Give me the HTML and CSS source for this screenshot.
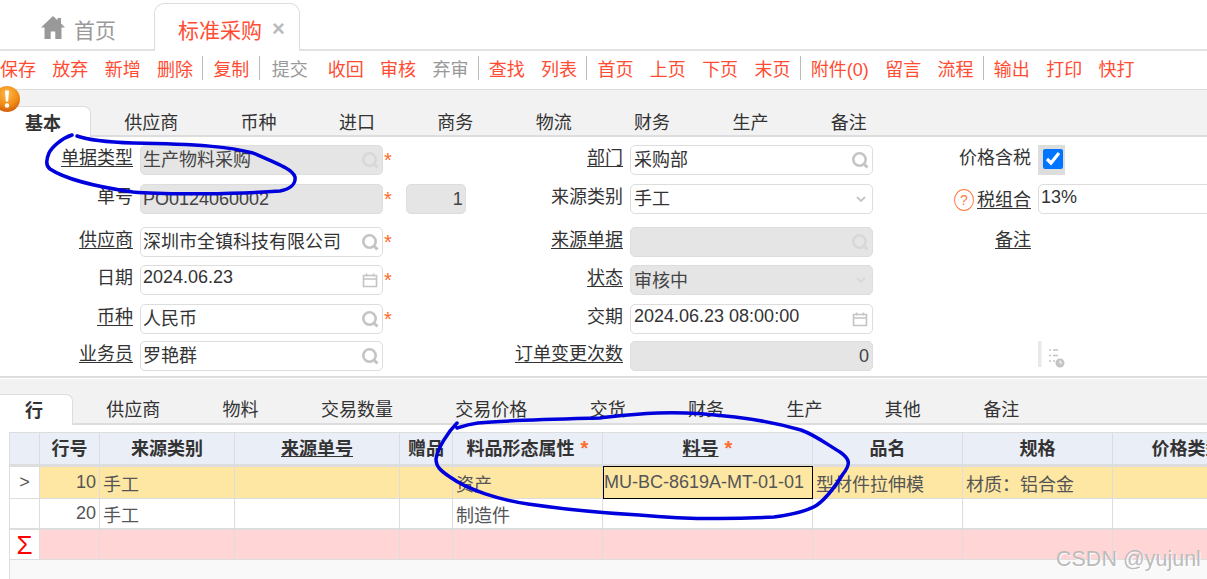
FILE: index.html
```html
<!DOCTYPE html>
<html lang="en">
<head>
  <meta charset="UTF-8" />
  <meta name="viewport" content="width=device-width, initial-scale=1.0"/>
  <title>标准采购</title>
  <link rel="stylesheet" href="styles.css">
</head>
<body>

  <svg class="sprites" width="0" height="0">
    <symbol id="i-search" viewBox="0 0 18 18">
      <circle cx="8.500" cy="8.500" r="6.200" fill="none" stroke="currentColor" stroke-width="2.600"/>
      <path d="M13 13l3.500 3.500" stroke="currentColor" stroke-width="3" fill="none"/>
    </symbol>
    <symbol id="i-date" viewBox="0 0 18 18">
      <path d="M2.500 4.500h13v11h-13zM2.500 8h13M5.500 2.500v3M12.500 2.500v3" fill="none" stroke="currentColor" stroke-width="1.600"/>
    </symbol>
    <symbol id="i-down" viewBox="0 0 12 12">
      <path d="M2 4l4 4 4-4" fill="none" stroke="currentColor" stroke-width="1.800"/>
    </symbol>
  </svg>

  <div class="top-tabs">
    <div class="top-tab">
      <svg class="home" viewBox="0 0 24 24"><path d="M12 1L0 12.500h3.500V24h6.200v-7.500h4.600V24h6.200V12.500H24L20 8.600V3h-3.500v2.300z" fill="#999"/></svg>
      首页
    </div>
    <div class="top-tab active">标准采购 <span class="close">×</span></div>
  </div>

  <div class="toolbar">
    <a>保存</a><a>放弃</a><a>新增</a><a>删除</a><i></i>
    <a>复制</a><i></i>
    <a class="off first">提交</a><a>收回</a><a>审核</a><a class="off">弃审</a><i></i>
    <a>查找</a><a>列表</a><i></i>
    <a>首页</a><a>上页</a><a>下页</a><a>末页</a><i></i>
    <a>附件(0)</a><a>留言</a><a>流程</a><i></i>
    <a>输出</a><a>打印</a><a>快打</a>
  </div>

  <div class="tabs main-tabs">
    <span class="tab active">基本</span>
    <span class="tab">供应商</span>
    <span class="tab">币种</span>
    <span class="tab">进口</span>
    <span class="tab">商务</span>
    <span class="tab">物流</span>
    <span class="tab">财务</span>
    <span class="tab">生产</span>
    <span class="tab">备注</span>
  </div>

  <div class="form">
    <div class="field">
      <label class="link">单据类型</label>
      <div class="box off">生产物料采购<svg class="ico faint"><use href="#i-search"/></svg></div><b class="req">*</b>
    </div>
    <div class="field">
      <label class="link">部门</label>
      <div class="box">采购部<svg class="ico"><use href="#i-search"/></svg></div>
    </div>
    <div class="field">
      <label>价格含税</label>
      <div class="check-cell"><input type="checkbox" checked></div>
    </div>

    <div class="field">
      <label>单号</label>
      <div class="box off">PO0124060002</div><b class="req">*</b>
      <div class="box off seq">1</div>
    </div>
    <div class="field">
      <label>来源类别</label>
      <div class="box">手工<svg class="ico small"><use href="#i-down"/></svg></div>
    </div>
    <div class="field">
      <label class="link low"><span class="help">?</span>税组合</label>
      <div class="box wide latin">13%</div>
    </div>

    <div class="field">
      <label class="link">供应商</label>
      <div class="box">深圳市全镇科技有限公司<svg class="ico"><use href="#i-search"/></svg></div><b class="req">*</b>
    </div>
    <div class="field">
      <label class="link">来源单据</label>
      <div class="box off"><svg class="ico faint"><use href="#i-search"/></svg></div>
    </div>
    <div class="field">
      <label class="link">备注</label>
    </div>

    <div class="field">
      <label>日期</label>
      <div class="box latin">2024.06.23<svg class="ico"><use href="#i-date"/></svg></div><b class="req">*</b>
    </div>
    <div class="field">
      <label class="link">状态</label>
      <div class="box off lower">审核中<svg class="ico small faint"><use href="#i-down"/></svg></div>
    </div>
    <div class="field"></div>

    <div class="field">
      <label class="link">币种</label>
      <div class="box">人民币<svg class="ico"><use href="#i-search"/></svg></div><b class="req">*</b>
    </div>
    <div class="field">
      <label>交期</label>
      <div class="box latin">2024.06.23 08:00:00<svg class="ico"><use href="#i-date"/></svg></div>
    </div>
    <div class="field"></div>

    <div class="field">
      <label class="link">业务员</label>
      <div class="box">罗艳群<svg class="ico"><use href="#i-search"/></svg></div>
    </div>
    <div class="field">
      <label class="link">订单变更次数</label>
      <div class="box off num">0</div>
    </div>
    <div class="field">
      <label></label>
      <svg class="tool-icon" viewBox="0 0 27 28">
        <rect x="0" y="0" width="3.500" height="26" fill="#e8e8e8"/>
        <path d="M11 9h2M15 9h5M11 14.500h2M15 14.500h5M11 20h2M15 20h2" stroke="#c4c4c4" stroke-width="1.600" fill="none"/>
        <circle cx="22" cy="22" r="4.500" fill="#c4c4c4"/>
        <path d="M22 19.500V22h2" stroke="#fff" stroke-width="1" fill="none"/>
      </svg>
    </div>
  </div>

  <div class="tabs sub-tabs">
    <span class="tab active">行</span>
    <span class="tab">供应商</span>
    <span class="tab">物料</span>
    <span class="tab">交易数量</span>
    <span class="tab">交易价格</span>
    <span class="tab">交货</span>
    <span class="tab">财务</span>
    <span class="tab">生产</span>
    <span class="tab">其他</span>
    <span class="tab">备注</span>
  </div>

  <div class="grid-wrap">
    <div class="grid-box">
      <table class="lines">
        <colgroup>
          <col class="c-mark"><col class="c-no"><col class="c-src"><col class="c-doc"><col class="c-gift">
          <col class="c-form"><col class="c-item"><col class="c-name"><col class="c-spec"><col class="c-price">
        </colgroup>
        <thead>
          <tr>
            <th></th>
            <th>行号</th>
            <th>来源类别</th>
            <th><u>来源单号</u></th>
            <th>赠品</th>
            <th>料品形态属性 <b class="req">*</b></th>
            <th><u>料号</u> <b class="req">*</b></th>
            <th>品名</th>
            <th>规格</th>
            <th>价格类型</th>
          </tr>
        </thead>
        <tbody>
          <tr class="current">
            <td class="mark">&gt;</td>
            <td class="right">10</td>
            <td>手工</td>
            <td></td>
            <td></td>
            <td>资产</td>
            <td class="focus">MU-BC-8619A-MT-01-01</td>
            <td>型材件拉伸模</td>
            <td>材质：铝合金</td>
            <td></td>
          </tr>
          <tr>
            <td class="mark"></td>
            <td class="right">20</td>
            <td>手工</td>
            <td></td>
            <td></td>
            <td>制造件</td>
            <td></td>
            <td></td>
            <td></td>
            <td></td>
          </tr>
          <tr class="total">
            <td class="mark sigma">Σ</td>
            <td></td><td></td><td></td><td></td><td></td><td></td><td></td><td></td><td></td>
          </tr>
        </tbody>
      </table>
    </div>
  </div>

  <!-- things lying over the page -->
  <svg class="alert" viewBox="0 0 26 26">
    <defs>
      <radialGradient id="alert-fill" cx="50%" cy="30%" r="75%">
        <stop offset="0" stop-color="#ffb84a"/>
        <stop offset="0.6" stop-color="#f08a14"/>
        <stop offset="1" stop-color="#c9560a"/>
      </radialGradient>
    </defs>
    <circle cx="13" cy="13" r="13" fill="url(#alert-fill)"/>
    <path d="M11 4.500h4l-.8 11h-2.400z" fill="#fff"/>
    <circle cx="13" cy="19.500" r="2.200" fill="#fff"/>
  </svg>

  <svg class="ink" viewBox="0 0 1207 579">
    <path d="M72 135C62 138 52 147 49 153C46 160 46 166 50 169C62 177 90 186 133 192C165 195 240 194 280 191C290 189 296 184 295 177C293 170 283 166 253 153C230 147 200 144 133 143C105 142 88 140 77 136"/>
    <path d="M457 423C447 433 438 448 436 459C436 467 441 471 450 477C468 490 500 500 528 504C555 508 585 512 639 515C670 518 720 520 774 517C795 514 810 510 817 505C827 498 838 482 843 474C851 464 850 459 840 452C825 443 815 435 801 430C780 424 760 420 735 417C710 414 680 412 658 413C630 414 610 417 600 418C560 419 510 420 478 423C470 424 463 426 457 428"/>
  </svg>

  <div class="watermark">CSDN @yujunl</div>

</body>
</html>
```

FILE: styles.css
```css
html, body {
  margin: 0;
  height: 579px;
  overflow: hidden;
}

body {
  position: relative;
  font-family: "Liberation Sans", "Noto Sans CJK SC", sans-serif;
  font-size: 18px;
  color: #333;
  background: #fff;
}

.sprites {
  position: absolute;
}

/* top page tabs */
.top-tabs {
  display: flex;
  align-items: flex-end;
  height: 49px;
  border-bottom: 2px solid #e2e2e2;
}

.top-tab {
  display: flex;
  align-items: center;
  gap: 9px;
  height: 46px;
  margin-bottom: -2px;
  padding-top: 2px;
  box-sizing: border-box;
  font-size: 21px;
  color: #999;
}

.top-tab:first-child {
  width: 154px;
  padding-left: 41px;
}

.top-tab.active {
  width: 146px;
  padding-left: 23px;
  gap: 10px;
  height: 48px;
  background: #fff;
  border: 1px solid #ddd;
  border-bottom: none;
  border-radius: 10px 10px 0 0;
  color: #ff4c33;
}

.home {
  width: 24px;
  height: 24px;
  margin-top: -4px;
}

.close {
  font-size: 22px;
  font-weight: bold;
  color: #bbb;
}

/* toolbar */
.toolbar {
  display: flex;
  align-items: center;
  height: 39px;
  padding-bottom: 5px;
  box-sizing: border-box;
  border-bottom: 1px solid #ddd;
  white-space: nowrap;
}

.toolbar a {
  margin-right: 16.350px;
  color: #ff4c33;
}

.toolbar a.off {
  color: #999;
}

.toolbar a.first {
  margin: 0 20px 0 2px;
}

.toolbar i {
  width: 1px;
  height: 24px;
  margin: 0 10px 0 -7px;
  background: #bbb;
}

/* inner tab bars */
.tabs {
  display: flex;
  align-items: flex-end;
  box-sizing: border-box;
  background: #f2f2f2;
  border-bottom: 2px solid #ddd;
  white-space: nowrap;
}

.main-tabs {
  height: 47px;
}

.sub-tabs {
  height: 46px;
}

.tab {
  height: 29px;
  padding: 0 31.200px;
}

.main-tabs .tab {
  line-height: 35px;
}

.sub-tabs .tab {
  line-height: 33px;
}

.tab.active {
  height: 30px;
  margin-bottom: -2px;
  margin-right: 2px;
  padding: 0 29px 0 25px;
  box-sizing: content-box;
  background: #fff;
  border-right: 1px solid #ddd;
  border-top: 1px solid #ddd;
  border-radius: 0 7px 0 0;
  font-weight: bold;
}

/* header form */
.form {
  display: grid;
  grid-template-columns: 465px 408px 1fr;
  grid-template-rows: 39px 43px 38px 39px 37px 30px;
  height: 231px;
  padding-top: 8px;
  margin-bottom: 1px;
  border-bottom: 2px solid #ddd;
}

.field {
  display: flex;
  align-items: flex-start;
  min-width: 0;
}

.field label {
  flex: none;
  width: 133px;
  margin-right: 7px;
  line-height: 26px;
  text-align: right;
  white-space: nowrap;
}

.field:nth-child(3n+2) label,
.field:nth-child(3n) label {
  width: 158px;
}

.link {
  text-decoration: underline;
  text-underline-offset: 2px;
}

.low {
  padding-top: 3px;
}

.help {
  display: inline-block;
  width: 18px;
  height: 20px;
  margin-right: 3px;
  border: 1px solid #ff7a45;
  border-radius: 50%;
  font-size: 14px;
  line-height: 20px;
  text-align: center;
  color: #ff7a45;
  vertical-align: 1px;
}

.box {
  position: relative;
  flex: none;
  width: 243px;
  height: 30px;
  box-sizing: border-box;
  padding-left: 2px;
  border: 1px solid #ddd;
  border-radius: 5px;
  line-height: 29px;
  white-space: nowrap;
}

.field:nth-child(3n+2) .box {
  padding-left: 3px;
}

.box.off {
  background: #e5e5e5;
  color: #444;
}

.box.lower {
  line-height: 31px;
}

.box.latin {
  line-height: 23px;
}

.box.seq {
  width: 60px;
  margin-left: 14px;
  padding-right: 2px;
  text-align: right;
}

.box.num {
  padding-right: 3px;
  text-align: right;
}

.box.wide {
  width: 200px;
  line-height: 24px;
}

.ico {
  position: absolute;
  top: 5px;
  right: 3px;
  width: 18px;
  height: 18px;
  color: #c4c4c4;
}

.ico.small {
  top: 8px;
  right: 5px;
  width: 12px;
  height: 12px;
}

.ico.faint {
  color: #d8d8d8;
}

.req {
  margin-left: 1px;
  font-size: 20px;
  font-weight: normal;
  line-height: 30px;
  color: #ff6a2a;
}

.lines .req {
  font-weight: bold;
  line-height: 20px;
}

.check-cell {
  display: flex;
  align-items: center;
  justify-content: center;
  width: 27px;
  height: 30px;
  background: #ddd;
}

.check-cell input {
  width: 20px;
  height: 20px;
  margin: 0 0 2px 3px;
  accent-color: #0075ff;
}

.tool-icon {
  width: 27px;
  height: 28px;
}

/* detail grid */
.grid-wrap {
  height: 156px;
  box-sizing: border-box;
  padding: 7px 0 0 9px;
  overflow: hidden;
}

.grid-box {
  height: 100%;
  background: #f9f9f9;
  border-left: 1px solid #ddd;
  border-top-left-radius: 4px;
}

.lines {
  width: 1253px;
  margin-left: -1px;
  table-layout: fixed;
  border-collapse: collapse;
  color: #555;
}

.c-mark { width: 30px; }
.c-no { width: 60px; }
.c-src { width: 135px; }
.c-doc { width: 165px; }
.c-gift { width: 53px; }
.c-form { width: 150px; }
.c-item { width: 210px; }
.c-name { width: 150px; }
.c-spec { width: 150px; }
.c-price { width: 150px; }

.lines th {
  height: 28px;
  padding: 0 0 3px;
  background: #eaeef6;
  border: 1px solid #ddd;
  border-bottom: 3px solid #ddd;
  color: #333;
  white-space: nowrap;
}

.lines td {
  height: 29px;
  padding: 0 3px;
  background: #fff;
  border: 1px solid #ddd;
  white-space: nowrap;
  overflow: hidden;
}

.lines .right {
  text-align: right;
}

.lines .mark {
  padding: 0;
  background: #fff;
  text-align: center;
}

.lines .current td {
  height: 31px;
  background: #fee7a3;
}

.lines .current .mark {
  background: #fff;
}

.lines .current .focus {
  padding: 0 1px;
  outline: 1px solid #000;
  outline-offset: -1px;
}

.lines .total td {
  height: 29px;
  background: #ffd5d5;
  border-top-width: 2px;
}

.lines .total .sigma {
  font-size: 26px;
  line-height: 26px;
  background: #fff;
  color: #f00;
}

/* overlays */
.alert {
  position: absolute;
  left: -6px;
  top: 86px;
  width: 26px;
  height: 26px;
}

.ink {
  position: absolute;
  left: 0;
  top: 0;
  width: 1207px;
  height: 579px;
  pointer-events: none;
}

.ink path {
  fill: none;
  stroke: #0000dc;
  stroke-width: 3.500;
  stroke-linecap: round;
}

.watermark {
  position: absolute;
  left: 1056px;
  top: 547px;
  font-size: 21.500px;
  color: #bbb;
  text-shadow: 1px 1px 1px #fff;
  white-space: nowrap;
}
```
